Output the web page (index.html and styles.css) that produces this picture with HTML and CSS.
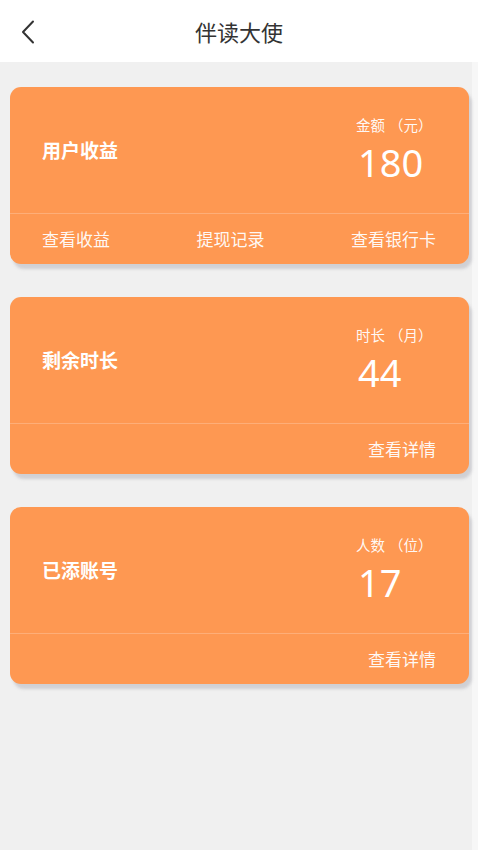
FILE: index.html
```html
<!DOCTYPE html>
<html lang="zh-CN">
<head>
<meta charset="utf-8">
<title>伴读大使</title>
<link rel="stylesheet" href="styles.css">
</head>
<body>
<header class="topbar">
  <span class="back">
    <svg width="14" height="24" viewBox="0 0 14 24"><path d="M12 1.5 L2 12 L12 22.5" fill="none" stroke="#333" stroke-width="2" stroke-linecap="round" stroke-linejoin="round"/></svg>
  </span>
  <h1 class="title">伴读大使</h1>
</header>
<main class="content">
  <section class="card">
    <div class="card-top">
      <div class="card-title">用户收益</div>
      <div class="stat">
        <div class="stat-label">金额<span class="unit">（元）</span></div>
        <div class="stat-value">180</div>
      </div>
    </div>
    <div class="card-actions spread">
      <span>查看收益</span>
      <span>提现记录</span>
      <span>查看银行卡</span>
    </div>
  </section>
  <section class="card">
    <div class="card-top">
      <div class="card-title">剩余时长</div>
      <div class="stat">
        <div class="stat-label">时长<span class="unit">（月）</span></div>
        <div class="stat-value">44</div>
      </div>
    </div>
    <div class="card-actions end">
      <span>查看详情</span>
    </div>
  </section>
  <section class="card">
    <div class="card-top">
      <div class="card-title">已添账号</div>
      <div class="stat">
        <div class="stat-label">人数<span class="unit">（位）</span></div>
        <div class="stat-value">17</div>
      </div>
    </div>
    <div class="card-actions end">
      <span>查看详情</span>
    </div>
  </section>
</main>
</body>
</html>
```
FILE: styles.css
```css
* { box-sizing: border-box; }
html, body { margin: 0; padding: 0; }
body {
  width: 478px;
  min-height: 850px;
  background: #f7f7f7;
  font-family: "Noto Sans CJK SC", "Noto Sans", sans-serif;
}
.topbar {
  height: 62px;
  background: #fff;
  display: flex;
  align-items: center;
  justify-content: center;
  position: relative;
}
.back {
  position: absolute;
  left: 21px;
  top: 20px;
  display: flex;
}
.title {
  margin: 0;
  font-size: 22px;
  font-weight: 400;
  color: #333;
  line-height: 30px;
  margin-top: -1px;
}
.content {
  width: 472px;
  min-height: 788px;
  background: #f0f0f0;
  padding: 25px 0 0 10px;
  display: flex;
  flex-direction: column;
  gap: 33px;
}
.card {
  width: 459px;
  height: 177px;
  background: #fe9852;
  border-radius: 11px;
  box-shadow: 3px 5px 3px rgba(150, 150, 160, 0.35);
  color: #fff;
  display: flex;
  flex-direction: column;
}
.card-top {
  height: 127px;
  display: flex;
  justify-content: space-between;
  align-items: center;
  padding: 0 37px 0 32px;
  border-bottom: 1px solid rgba(255, 255, 255, 0.22);
}
.card-title {
  font-size: 19px;
  font-weight: 700;
  line-height: 26px;
  margin-top: 0;
}
.stat {
  align-self: flex-start;
  padding-top: 28px;
  width: 74px;
}
.stat-label {
  font-size: 14.5px;
  line-height: 20px;
  color: rgba(255, 255, 255, 0.95);
  white-space: nowrap;
  margin-left: -2px;
}
.unit {
  margin-left: 4px;
}
.stat-value {
  font-family: "Noto Sans", sans-serif;
  font-size: 38px;
  line-height: 44px;
  margin-top: 5px;
  font-weight: 400;
}
.card-actions {
  flex: 1;
  display: flex;
  align-items: center;
  padding: 0 33px 2px 32px;
  font-size: 17px;
  color: rgba(255, 255, 255, 0.95);
}
.card-actions.spread { justify-content: space-between; }
.card-actions.end { justify-content: flex-end; }
```
